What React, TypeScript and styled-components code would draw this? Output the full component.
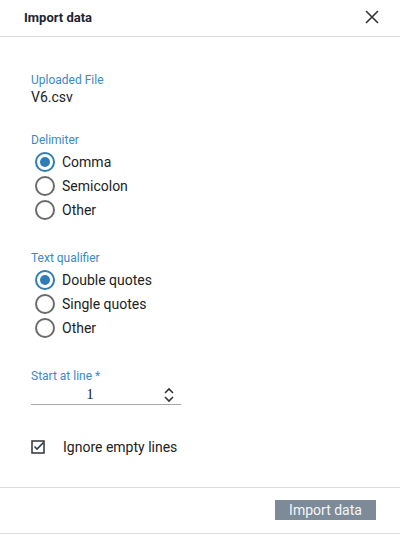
import styled, { createGlobalStyle } from "styled-components";

const GlobalStyle = createGlobalStyle`
	body {
		margin: 0;
		background: #ffffff;
		font-family: Roboto, "Liberation Sans", sans-serif;
		color: #222222;
	}
`;

const Dialog = styled.div`
	display: flex;
	flex-direction: column;
	width: 400px;
	height: 534px;
	border-bottom: 1px solid #dddddd;
	box-sizing: border-box;
`;

const Header = styled.header`
	display: flex;
	align-items: center;
	justify-content: space-between;
	height: 37px;
	padding: 0 24px 2px 24px;
	border-bottom: 1px solid #dcdcdc;
	box-sizing: border-box;
`;

const Title = styled.h2`
	margin: 0;
	font-size: 13px;
	font-weight: 700;
	color: #1e2530;
`;

const CloseButton = styled.button`
	display: flex;
	padding: 0;
	margin-right: -3px;
	border: none;
	background: none;
	cursor: pointer;
`;

const Body = styled.div`
	display: flex;
	flex-direction: column;
	flex: 1;
	padding: 36px 31px 0 31px;
`;

const Section = styled.section<{ gap: number }>`
	display: flex;
	flex-direction: column;
	margin-bottom: ${(props) => props.gap}px;
`;

const Label = styled.div<{ space?: number }>`
	font-size: 12px;
	line-height: 14px;
	color: #3d88c2;
	margin-bottom: ${(props) => props.space ?? 2}px;
`;

const Value = styled.div`
	font-size: 14px;
	line-height: 17px;
`;

const RadioRow = styled.label`
	display: flex;
	align-items: center;
	gap: 7px;
	height: 24px;
	padding-left: 4px;
	font-size: 14px;
	cursor: pointer;
`;

const Circle = styled.span<{ checked: boolean }>`
	display: flex;
	align-items: center;
	justify-content: center;
	width: 20px;
	height: 20px;
	border-radius: 50%;
	border: 2px solid ${(props) => (props.checked ? "#2f7db5" : "#6b6b6b")};
	box-sizing: border-box;
	&::after {
		content: "";
		display: ${(props) => (props.checked ? "block" : "none")};
		width: 10px;
		height: 10px;
		border-radius: 50%;
		background: #2f7db5;
	}
`;

const InputWrap = styled.div`
	display: flex;
	align-items: center;
	width: 150px;
	height: 19px;
	border-bottom: 1px solid #a8a8a8;
`;

const NumberText = styled.div`
	flex: 1;
	text-align: center;
	font-family: "Liberation Serif", serif;
	font-size: 15px;
	padding-right: 14px;
`;

const Spinner = styled.div`
	display: flex;
	width: 16px;
	margin-right: 2px;
`;

const CheckRow = styled.label`
	display: flex;
	align-items: center;
	gap: 18px;
	font-size: 14px;
	margin-top: 34px;
`;

const Footer = styled.footer`
	display: flex;
	justify-content: flex-end;
	height: 46px;
	padding: 12px 24px 0 0;
	border-top: 1px solid #dcdcdc;
	box-sizing: border-box;
`;

const PrimaryButton = styled.button`
	width: 101px;
	height: 20px;
	padding: 0;
	border: none;
	background: #7d8b99;
	color: #f4f6f8;
	font-family: Roboto, "Liberation Sans", sans-serif;
	font-size: 14px;
	cursor: pointer;
`;

function Radio({ label, checked }: { label: string; checked?: boolean }) {
	return (
		<RadioRow>
			<Circle checked={!!checked} />
			{label}
		</RadioRow>
	);
}

export default function App() {
	return (
		<>
			<GlobalStyle />
			<Dialog>
				<Header>
					<Title>Import data</Title>
					<CloseButton>
						<svg width="14" height="14" viewBox="0 0 14 14">
							<path d="M1 1 L13 13 M13 1 L1 13" stroke="#333" strokeWidth="1.6" />
						</svg>
					</CloseButton>
				</Header>
				<Body>
					<Section gap={27}>
						<Label>Uploaded File</Label>
						<Value>V6.csv</Value>
					</Section>
					<Section gap={29}>
						<Label space={3}>Delimiter</Label>
						<Radio label="Comma" checked />
						<Radio label="Semicolon" />
						<Radio label="Other" />
					</Section>
					<Section gap={29}>
						<Label space={3}>Text qualifier</Label>
						<Radio label="Double quotes" checked />
						<Radio label="Single quotes" />
						<Radio label="Other" />
					</Section>
					<Section gap={0}>
						<Label>Start at line *</Label>
						<InputWrap>
							<NumberText>1</NumberText>
							<Spinner>
								<svg width="12" height="18" viewBox="0 0 12 18">
									<path d="M2 7 L6 3 L10 7 M2 11 L6 15 L10 11" stroke="#333" strokeWidth="1.6" fill="none" />
								</svg>
							</Spinner>
						</InputWrap>
					</Section>
					<CheckRow>
						<svg width="14" height="14" viewBox="0 0 14 14">
							<rect x="1" y="1" width="12" height="12" fill="none" stroke="#333" strokeWidth="1.5" />
							<path d="M3.5 6.5 L6 9 L12.5 2.5" stroke="#2a3d52" strokeWidth="1.6" fill="none" />
						</svg>
						Ignore empty lines
					</CheckRow>
				</Body>
				<Footer>
					<PrimaryButton>Import data</PrimaryButton>
				</Footer>
			</Dialog>
		</>
	);
}
